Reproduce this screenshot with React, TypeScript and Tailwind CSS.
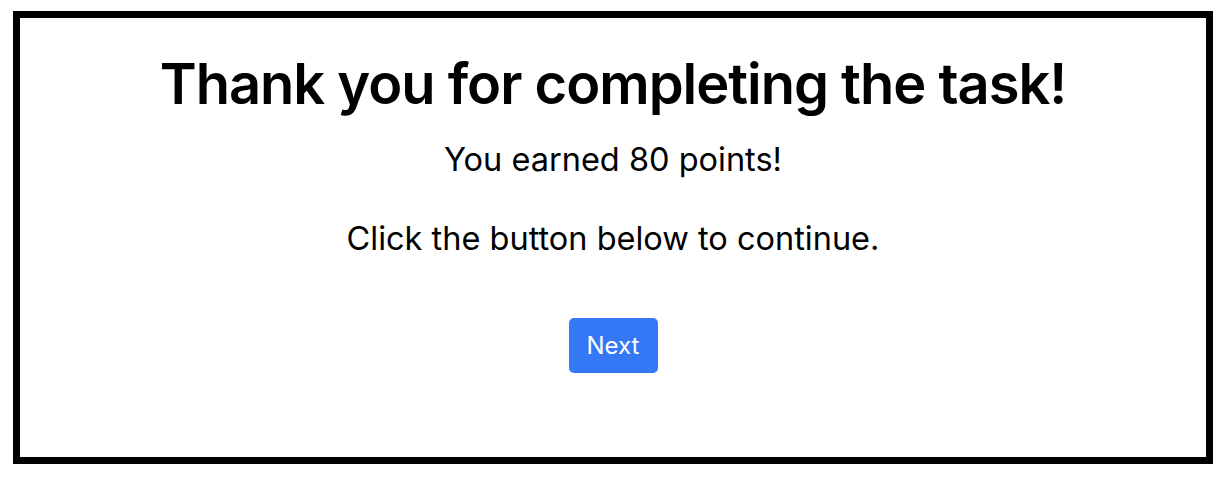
export default function App() {
  return (
    <div className="min-h-screen bg-white pt-[11px] px-[13px]" style={{ fontFamily: 'Inter, "Noto Sans", sans-serif' }}>
      <div className="w-[1200px] h-[453px] border-[7px] border-black flex flex-col items-center text-black">
        <h1 className="mt-[32px] text-[56px] leading-[68px] font-semibold tracking-[-0.018em]">
          Thank you for completing the task!
        </h1>
        <p className="mt-[22px] text-[32.5px] leading-[40px]">You earned 80 points!</p>
        <p className="mt-[39px] text-[32.5px] leading-[40px]">Click the button below to continue.</p>
        <button className="mt-[59px] w-[89px] h-[55px] rounded-[5px] bg-[#3478f6] text-white text-[24px]">
          Next
        </button>
      </div>
    </div>
  )
}
